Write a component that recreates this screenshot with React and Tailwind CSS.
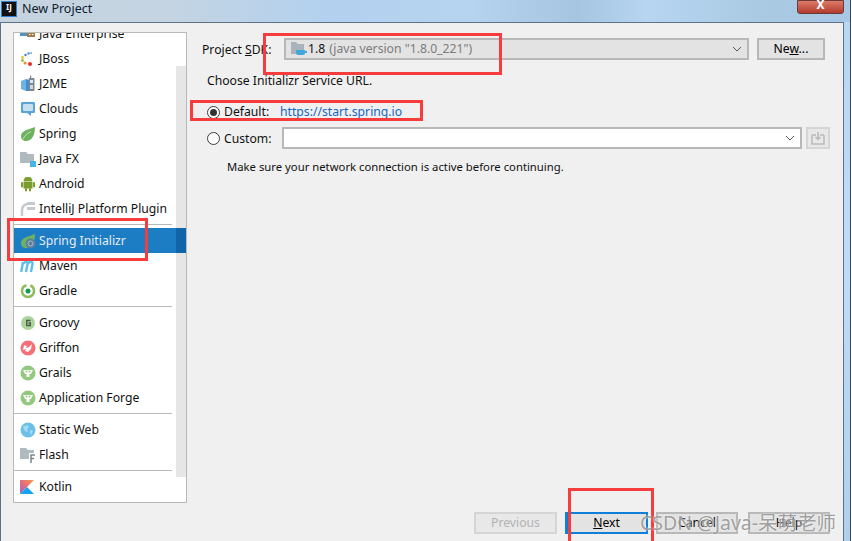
import React from 'react';

const JBossIcon = () => (
  <svg width="16" height="16" viewBox="0 0 16 16">
    <circle cx="11" cy="2" r="1" fill="#7aa6e0" /><circle cx="8.500" cy="2.500" r="1.200" fill="#5b8fd6" />
    <circle cx="5.500" cy="4" r="1.200" fill="#3f7fd0" /><circle cx="2.500" cy="6.500" r="1.400" fill="#e8c02c" />
    <circle cx="2.500" cy="9.500" r="1.400" fill="#8cc63e" /><circle cx="5" cy="12" r="1.500" fill="#ef8a22" />
    <circle cx="10" cy="13" r="2" fill="#ee2a24" />
  </svg>
);

const J2meIcon = () => (
  <svg width="16" height="18" viewBox="0 0 16 18">
    <path d="M1 6l5-2v12l-5-2z" fill="#6fb2e6" /><path d="M6 4l3 1v11H6z" fill="#3d8fd1" />
    <rect x="8.500" y="3" width="6" height="13" rx="1" fill="#7b8794" /><rect x="10" y="0.500" width="1.200" height="3" fill="#7b8794" />
    <rect x="10" y="5" width="3" height="3" fill="#dfe8f0" /><rect x="10" y="10" width="3" height="4" fill="#cfd6dc" />
  </svg>
);

const CloudsIcon = () => (
  <svg width="16" height="16" viewBox="0 0 16 16">
    <path d="M2 1h12a1.500 1.500 0 0 1 1 1v9a1.500 1.500 0 0 1-1 1h-3v3l-4-3H2a1.500 1.500 0 0 1-1-1V2a1.500 1.500 0 0 1 1-1z" fill="#5aa5d6" />
    <rect x="3" y="3" width="10" height="7" rx="1" fill="#c7dfee" />
  </svg>
);

const LeafIcon = () => (
  <svg width="16" height="16" viewBox="0 0 16 16">
    <path d="M15 1C15 9 12 15 6 15 2.500 15 1 12.500 1 10 1 5 7 4 15 1z" fill="#6db35f" />
    <path d="M3 13C5 9 8 7 11 5.500" stroke="#ffffff" strokeWidth="1" fill="none" opacity="0.6" />
  </svg>
);

const FolderIcon = ({ children }) => (
  <svg width="16" height="16" viewBox="0 0 16 16">
    <path d="M0 1h6l2 2h6v9H0z" fill="#aeb9c0" />
    {children}
  </svg>
);

const AndroidIcon = () => (
  <svg width="16" height="16" viewBox="0 0 16 16" fill="#7a9c2c">
    <path d="M3.500 5.500a4.500 4.500 0 0 1 9 0z" /><rect x="3.500" y="6" width="9" height="6.500" />
    <rect x="1" y="6" width="2" height="5.500" rx="1" /><rect x="13" y="6" width="2" height="5.500" rx="1" />
    <rect x="5" y="12" width="2" height="3.500" rx="1" /><rect x="9" y="12" width="2" height="3.500" rx="1" />
    <path d="M5 1l1.500 2M11 1L9.500 3" stroke="#7a9c2c" strokeWidth="0.800" />
  </svg>
);

const PluginIcon = () => (
  <svg width="16" height="16" viewBox="0 0 16 16" fill="none">
    <path d="M8 3a6 6 0 0 0-6 6v6" stroke="#c4cacd" strokeWidth="2.500" />
    <rect x="7" y="1" width="8" height="3" fill="#c4cacd" /><rect x="7" y="6" width="8" height="3" fill="#c4cacd" />
  </svg>
);

const MavenIcon = () => (
  <svg width="16" height="14" viewBox="0 0 16 14" fill="none" stroke="#5cc0e8" strokeWidth="2.400">
    <path d="M1.200 13l1.800-10M3 5c2.500-3.500 5-2.500 4.500 0L6 13M7.500 5c2.500-3.500 5.500-2.500 5 0L11 13" />
  </svg>
);

const GradleIcon = () => (
  <svg width="16" height="16" viewBox="0 0 16 16" fill="none">
    <circle cx="8" cy="8" r="6" stroke="#8cbd5a" strokeWidth="2.500" strokeDasharray="26 4" />
    <circle cx="8" cy="8" r="2.500" fill="#109a55" />
  </svg>
);

const LetterIcon = () => (
  <svg width="16" height="16" viewBox="0 0 16 16">
    <circle cx="8" cy="8" r="7" fill="#a9d49b" />
    <path d="M10.500 5.500H6.800v5h3.500V8H8.500" stroke="#4d5a48" strokeWidth="1.400" fill="none" />
  </svg>
);

const GriffonIcon = () => (
  <svg width="16" height="16" viewBox="0 0 16 16">
    <circle cx="8" cy="8" r="7.500" fill="#f46f76" />
    <path d="M4 5l3 1-1 2 3-1 3-3-1 5-3 3-3-1 1-2-3 1z" fill="#ffffff" />
  </svg>
);

const GrailsIcon = () => (
  <svg width="16" height="16" viewBox="0 0 16 16">
    <circle cx="8" cy="8" r="7.500" fill="#93c97f" />
    <path d="M3 5h10l-2 4H9.500v3h-3V9H5z" fill="#ffffff" />
    <circle cx="6.500" cy="6.500" r="1" fill="#93c97f" /><circle cx="9.500" cy="6.500" r="1" fill="#93c97f" />
  </svg>
);

const GlobeIcon = () => (
  <svg width="16" height="16" viewBox="0 0 16 16">
    <circle cx="8" cy="8" r="7.500" fill="#6cc0e8" />
    <path d="M3 5l4-2 2 2-2 2 1 3-3-1zM10 8l3 1-2 4-1-2z" fill="#a6dcf2" />
  </svg>
);

const KotlinIcon = () => (
  <svg width="14" height="14" viewBox="0 0 14 14">
    <defs>
      <linearGradient id="kotlinGrad" x1="0" y1="1" x2="1" y2="0">
        <stop offset="0" stopColor="#9a5fd8" /><stop offset="0.500" stopColor="#e56f7a" /><stop offset="1" stopColor="#f39a4a" />
      </linearGradient>
    </defs>
    <path d="M0 0h14L0 14z" fill="url(#kotlinGrad)" />
    <path d="M7 7l7 7H0z" fill="#12a5f0" />
  </svg>
);

const listGroups = [
  [
    { label: 'Java Enterprise', icon: (
      <svg width="16" height="16" viewBox="0 0 16 16">
        <rect x="0" y="3" width="7" height="7" fill="#4f92c4" /><rect x="7" y="2" width="8" height="9" fill="#a37c46" />
        <path d="M9 4.500h1.500M9 6.500h1.500M9 8.500h1.500M12 4.500h1.500M12 6.500h1.500M12 8.500h1.500" stroke="#ffffff" />
      </svg>
    ) },
    { label: 'JBoss', icon: <JBossIcon /> },
    { label: 'J2ME', icon: <J2meIcon /> },
    { label: 'Clouds', icon: <CloudsIcon /> },
    { label: 'Spring', icon: <LeafIcon /> },
    { label: 'Java FX', icon: <FolderIcon><rect x="10" y="10" width="6" height="6" fill="#45b5e6" /></FolderIcon> },
    { label: 'Android', icon: <AndroidIcon /> },
    { label: 'IntelliJ Platform Plugin', icon: <PluginIcon /> },
  ],
  [
    { label: 'Spring Initializr', selected: true, icon: (
      <svg width="16" height="16" viewBox="0 0 16 16">
        <path d="M15 1C15 9 12 15 6 15 2.500 15 1 12.500 1 10 1 5 7 4 15 1z" fill="#6db35f" />
        <circle cx="10.500" cy="10.500" r="5" fill="#5d7f9c" />
        <circle cx="10.500" cy="10.500" r="2.500" fill="none" stroke="#a9bccb" />
      </svg>
    ) },
    { label: 'Maven', icon: <MavenIcon /> },
    { label: 'Gradle', icon: <GradleIcon /> },
  ],
  [
    { label: 'Groovy', icon: <LetterIcon /> },
    { label: 'Griffon', icon: <GriffonIcon /> },
    { label: 'Grails', icon: <GrailsIcon /> },
    { label: 'Application Forge', icon: <GrailsIcon /> },
  ],
  [
    { label: 'Static Web', icon: <GlobeIcon /> },
    { label: 'Flash', icon: (
      <FolderIcon>
        <rect x="9" y="6" width="7" height="10" fill="#ffffff" />
        <path d="M15 8h-4v8M11 11.500h3" stroke="#7d8489" strokeWidth="1.500" fill="none" />
      </FolderIcon>
    ) },
  ],
  [
    { label: 'Kotlin', icon: <KotlinIcon /> },
  ],
];

const FrameButton = ({ children, className = 'border-[#b8b8b8] bg-[#e3e3e3] text-black' }) => (
  <button className={`h-[22px] border-2 text-[12.2px] ${className}`}>
    {children}
  </button>
);

const Chevron = () => (
  <svg width="10" height="6" viewBox="0 0 10 6" fill="none" stroke="#555555" className="ml-auto">
    <path d="M1 1l4 4 4-4" />
  </svg>
);

const Marker = ({ className }) => (
  <div className={`absolute border-[3px] border-[#f63c3c] pointer-events-none ${className}`} />
);

export default function App() {
  return (
    <div
      className="relative flex w-[852px] h-[541px] overflow-hidden bg-white text-[12.2px] leading-[18px] text-[#111111]"
      style={{ fontFamily: '"Noto Sans", "Noto Sans CJK SC", sans-serif' }}
    >
      <div className="flex w-[850px] shrink-0 flex-col">
        {/* Title bar */}
        <div className="flex h-[22px] items-start bg-[linear-gradient(90deg,#c5d3df_0%,#c4d4e2_20%,#b3d1ef_38%,#b6d3ef_55%,#a6c5e1_68%,#b7d5f1_76%,#a9c9e2_90%,#a7c8e6_100%)]">
          <div className="ml-px mt-px flex h-4 w-4 items-start justify-center border border-[#2f7fd6] bg-[#111111] text-[8px] font-bold leading-[10px] text-white">IJ</div>
          <span className="ml-[5px] mt-px text-[12.5px] leading-[16px] text-[#10202f]">New Project</span>
          <div className="ml-auto mr-[6px] flex h-[14px] w-[47px] items-start justify-center rounded-b-[3px] border border-[#6b3a36] bg-gradient-to-b from-[#dc7a68] to-[#b23a2c]">
            <span className="text-[12px] font-bold leading-[8px] text-white">X</span>
          </div>
        </div>

        <div className="flex grow">
          {/* Dialog */}
          <div className="flex h-[519px] w-[844px] border-x border-t border-[#5f7184] bg-[#f0f0f0]">
            {/* Project type list */}
            <div className="ml-[12px] mt-[9px] h-[471px] w-[174px] shrink-0">
              <div className="relative h-full overflow-hidden border border-[#b9b9b9] bg-white">
                <div className="-mt-[12px]">
                  {listGroups.map((group, groupIdx) => (
                    <div key={groupIdx}>
                      {groupIdx > 0 && <div className="my-[3px] mr-[14px] h-px bg-[#b9b9b9]" />}
                      {group.map((item) => (
                        <div
                          key={item.label}
                          className={`flex h-[25px] items-center ${item.selected ? 'bg-[#1c7cc4] text-[#e8eef3]' : ''}`}
                        >
                          <span className="flex w-[25px] shrink-0 items-center pl-[6px]">{item.icon}</span>
                          <span className="whitespace-nowrap">{item.label}</span>
                        </div>
                      ))}
                    </div>
                  ))}
                </div>
                {/* Scrollbar */}
                <div className="absolute right-0 top-[33px] h-[411px] w-[10px] bg-[#e6e6e6]" />
                <div className="absolute right-0 top-[195px] h-[25px] w-[10px] bg-[#0f65a8]" />
              </div>
            </div>

            {/* Settings pane */}
            <div className="flex min-w-0 grow flex-col pr-[13px]">
              <div className="mt-[15px] flex items-center pl-[15px]">
                <span className="w-[82px] pt-[2px]">Project <u>S</u>DK:</span>
                <div className="flex h-[22px] w-[465px] items-center border-2 border-[#b8b8b8] bg-[#e3e3e3] px-[5px]">
                  <svg width="16" height="14" viewBox="0 0 16 14">
                    <path d="M0 0h5l2 2h6v10H0z" fill="#a9b3ba" />
                    <path d="M5 8h9v3a2 2 0 0 1-2 2H7a2 2 0 0 1-2-2zM14 9h2v2h-2z" fill="#3fa9dc" />
                  </svg>
                  <span className="ml-px text-[#111111]">1.8</span>
                  <span className="ml-[4px] text-[#7c7c7c]">(java version "1.8.0_221")</span>
                  <Chevron />
                </div>
                <FrameButton className="ml-[8px] w-[68px] border-[#b8b8b8] bg-[#e3e3e3] text-black">Ne<u>w</u>...</FrameButton>
              </div>

              <p className="mt-[12px] pl-[20px]">Choose Initializr Service URL.</p>

              <div className="mt-[13px] flex items-center pl-[20px]">
                <span className="flex h-[13px] w-[13px] items-center justify-center rounded-full border border-[#3c3c3c] bg-white">
                  <span className="h-[7px] w-[7px] rounded-full bg-[#333333]" />
                </span>
                <span className="ml-[4px] w-[56px]">Default:</span>
                <span className="text-[#1467c0]">https://start.spring.io</span>
              </div>

              <div className="mt-[6px] flex items-center pl-[20px]">
                <span className="h-[13px] w-[13px] rounded-full border border-[#3c3c3c] bg-white" />
                <span className="ml-[4px] w-[58px] pt-[2px]">Custom:</span>
                <div className="flex h-[22px] w-[520px] items-center border-2 border-[#b8b8b8] bg-white pr-[5px]">
                  <Chevron />
                </div>
                <div className="ml-[4px] flex h-[22px] w-[24px] items-center justify-center border-2 border-[#d5d5d5] bg-[#e8e8e8]">
                  <svg width="14" height="14" viewBox="0 0 14 14" fill="none" stroke="#b9b9b9" strokeWidth="1.500">
                    <path d="M1 4h4M9 4h4M1 4v9h12V4M7 1v7M4.500 6L7 8.500 9.500 6" />
                  </svg>
                </div>
              </div>

              <p className="mt-[9px] pl-[40px] text-[11.3px]">Make sure your network connection is active before continuing.</p>

              <div className="mt-auto mb-[7px] flex items-center justify-end">
                <FrameButton className="w-[83px] border-[#d5d5d5] bg-[#e8e8e8] text-[#b3b3b3]">Previous</FrameButton>
                <FrameButton className="ml-[8px] w-[83px] border-[#0f7fd8] border-l-[4px] bg-[#e3e3e3] pr-[2px] text-black"><u>N</u>ext</FrameButton>
                <FrameButton className="ml-[8px] w-[82px] border-[#b8b8b8] bg-[#e3e3e3] text-black">Cancel</FrameButton>
                <FrameButton className="ml-[10px] w-[82px] border-[#b8b8b8] bg-[#e3e3e3] text-black">Help</FrameButton>
              </div>
            </div>
          </div>

          {/* Glass frame on the right */}
          <div className="w-[6px] bg-gradient-to-b from-[#b7d8f5] via-[#bcdcf8] to-[#aed0ee]" />
        </div>
      </div>
      <div className="w-px bg-[#3d4650]" />
      <div className="w-px bg-white" />

      {/* Red annotations and watermark sit over the screenshot */}
      <Marker className="left-[263px] top-[33px] h-[42px] w-[239px]" />
      <Marker className="left-[190px] top-[100px] h-[21px] w-[233px]" />
      <Marker className="left-[7px] top-[218px] h-[43px] w-[141px]" />
      <Marker className="left-[568px] top-[488px] h-[60px] w-[86px]" />
      <div className="absolute left-[640px] top-[509px] whitespace-nowrap text-[19.5px] leading-[27px] text-[#888888]/80 [text-shadow:0_0_2px_#ffffff]">CSDN @Java-呆萌老师</div>
    </div>
  );
}
